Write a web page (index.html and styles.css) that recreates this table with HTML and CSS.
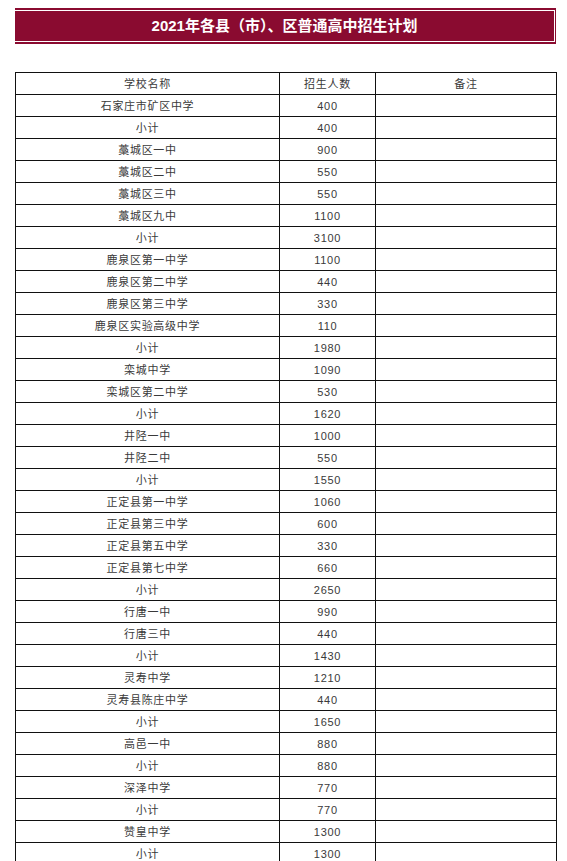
FILE: index.html
```html
<!DOCTYPE html>
<html lang="zh-CN">
<head>
<meta charset="utf-8">
<title>2021年各县（市）、区普通高中招生计划</title>
<link rel="stylesheet" href="styles.css">
</head>
<body>
<div class="page">
  <div class="banner">
    <div class="banner-inner">2021年各县（市）、区普通高中招生计划</div>
  </div>
  <table class="plan">
    <colgroup>
      <col class="c1"><col class="c2"><col class="c3">
    </colgroup>
    <thead>
      <tr><th>学校名称</th><th>招生人数</th><th>备注</th></tr>
    </thead>
    <tbody>
      <tr><td>石家庄市矿区中学</td><td>400</td><td></td></tr>
      <tr><td>小计</td><td>400</td><td></td></tr>
      <tr><td>藁城区一中</td><td>900</td><td></td></tr>
      <tr><td>藁城区二中</td><td>550</td><td></td></tr>
      <tr><td>藁城区三中</td><td>550</td><td></td></tr>
      <tr><td>藁城区九中</td><td>1100</td><td></td></tr>
      <tr><td>小计</td><td>3100</td><td></td></tr>
      <tr><td>鹿泉区第一中学</td><td>1100</td><td></td></tr>
      <tr><td>鹿泉区第二中学</td><td>440</td><td></td></tr>
      <tr><td>鹿泉区第三中学</td><td>330</td><td></td></tr>
      <tr><td>鹿泉区实验高级中学</td><td>110</td><td></td></tr>
      <tr><td>小计</td><td>1980</td><td></td></tr>
      <tr><td>栾城中学</td><td>1090</td><td></td></tr>
      <tr><td>栾城区第二中学</td><td>530</td><td></td></tr>
      <tr><td>小计</td><td>1620</td><td></td></tr>
      <tr><td>井陉一中</td><td>1000</td><td></td></tr>
      <tr><td>井陉二中</td><td>550</td><td></td></tr>
      <tr><td>小计</td><td>1550</td><td></td></tr>
      <tr><td>正定县第一中学</td><td>1060</td><td></td></tr>
      <tr><td>正定县第三中学</td><td>600</td><td></td></tr>
      <tr><td>正定县第五中学</td><td>330</td><td></td></tr>
      <tr><td>正定县第七中学</td><td>660</td><td></td></tr>
      <tr><td>小计</td><td>2650</td><td></td></tr>
      <tr><td>行唐一中</td><td>990</td><td></td></tr>
      <tr><td>行唐三中</td><td>440</td><td></td></tr>
      <tr><td>小计</td><td>1430</td><td></td></tr>
      <tr><td>灵寿中学</td><td>1210</td><td></td></tr>
      <tr><td>灵寿县陈庄中学</td><td>440</td><td></td></tr>
      <tr><td>小计</td><td>1650</td><td></td></tr>
      <tr><td>高邑一中</td><td>880</td><td></td></tr>
      <tr><td>小计</td><td>880</td><td></td></tr>
      <tr><td>深泽中学</td><td>770</td><td></td></tr>
      <tr><td>小计</td><td>770</td><td></td></tr>
      <tr><td>赞皇中学</td><td>1300</td><td></td></tr>
      <tr><td>小计</td><td>1300</td><td></td></tr>
    </tbody>
  </table>
</div>
</body>
</html>
```

FILE: styles.css
```css
html, body {
  margin: 0;
  padding: 0;
  background: #ffffff;
}

.page {
  padding: 8px 11px 0 15px;
  font-family: "Liberation Sans", "Noto Sans CJK SC", sans-serif;
  color: #3a3a3a;
}

.banner {
  background: #8a0b30;
  padding: 2px 0 2px 0;
}

.banner-inner {
  border-top: 1px solid #ffffff;
  border-bottom: 1px solid #ffffff;
  border-right: 1px solid #ffffff;
  margin-right: 1px;
  height: 30px;
  line-height: 30px;
  text-align: center;
  color: #ffffff;
  font-weight: bold;
  font-size: 15px;
  font-family: "Liberation Sans", "Noto Sans CJK SC", sans-serif;
}

.plan {
  margin-top: 28px;
  width: 541px;
  border-collapse: collapse;
  table-layout: fixed;
  font-size: 11px;
  letter-spacing: 0.7px;
}

.plan .c1 { width: 264px; }
.plan .c2 { width: 96px; }
.plan .c3 { width: 181px; }

.plan th,
.plan td {
  border: 1px solid #111111;
  height: 21px;
  padding: 0;
  text-align: center;
  vertical-align: middle;
  font-weight: normal;
  color: #3a3a3a;
  line-height: 14px;
}
```
